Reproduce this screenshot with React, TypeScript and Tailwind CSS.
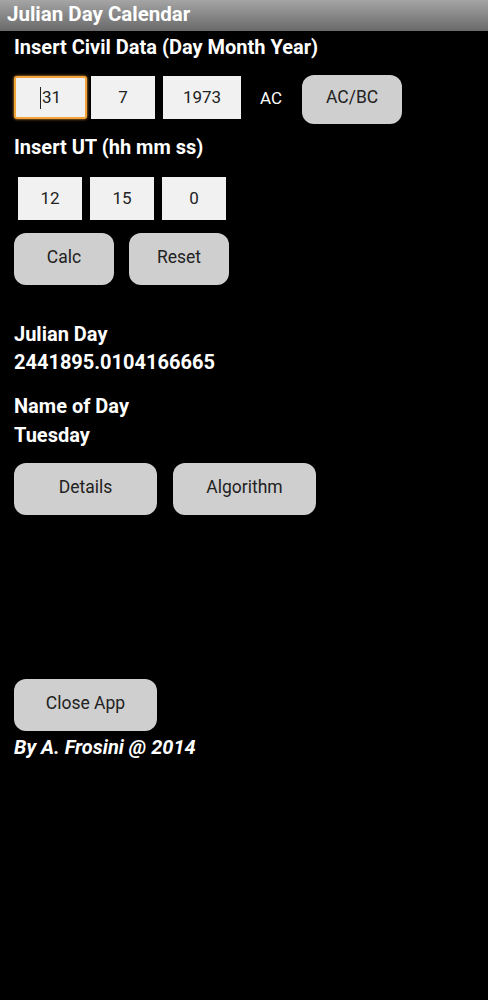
import React from 'react';

const font = { fontFamily: 'Roboto, "Noto Sans", sans-serif' };

function Field({ value, w, focused }: { value: string; w: string; focused?: boolean }) {
  return (
    <div
      className={`${w} h-[43px] flex items-center justify-center bg-[#f1f1f1] text-[17px] text-[#222] ${
        focused ? 'border-2 border-[#f2a33a] rounded-[3px] shadow-[0_0_3px_#f2a33a]' : ''
      }`}
    >
      {focused && <span className="w-px h-[22px] bg-[#222] mr-px" />}
      {value}
    </div>
  );
}

function Btn({ label, w, h = 'h-[52px]' }: { label: string; w: string; h?: string }) {
  return (
    <button className={`${w} ${h} rounded-[12px] bg-[#cfcfcf] text-[17.5px] text-[#222] pb-[4px]`}>
      {label}
    </button>
  );
}

export default function App() {
  return (
    <div className="w-[488px] h-[1000px] bg-black text-white" style={font}>
      <div className="h-[31px] bg-gradient-to-b from-[#a5a5a5] to-[#6a6a6a] pl-[7px] flex items-center text-[20.5px] font-bold leading-none pb-[3px]">
        Julian Day Calendar
      </div>

      <div className="pl-[14px]">
        <h2 className="text-[20px] font-bold leading-[24px] mt-[4px]">Insert Civil Data (Day Month Year)</h2>

        <div className="flex items-start mt-[17px] h-[46px]">
          <Field value="31" w="w-[73px]" focused />
          <div className="w-[4px]" />
          <Field value="7" w="w-[64px]" />
          <div className="w-[8px]" />
          <Field value="1973" w="w-[78px]" />
          <span className="ml-[19px] mt-[10px] text-[17px] text-white">AC</span>
          <div className="ml-[20px] -mt-[1px]">
            <Btn label="AC/BC" w="w-[100px]" h="h-[49px]" />
          </div>
        </div>

        <h2 className="text-[20px] font-bold leading-[24px] mt-[13px]">Insert UT (hh mm ss)</h2>

        <div className="flex mt-[18px] ml-[4px] gap-[8px]">
          <Field value="12" w="w-[64px]" />
          <Field value="15" w="w-[64px]" />
          <Field value="0" w="w-[64px]" />
        </div>

        <div className="flex mt-[13px] gap-[15px]">
          <Btn label="Calc" w="w-[100px]" />
          <Btn label="Reset" w="w-[100px]" />
        </div>

        <div className="mt-[35px] text-[20px] font-bold leading-[28px]">
          <div>Julian Day</div>
          <div>2441895.0104166665</div>
        </div>

        <div className="mt-[16px] text-[20px] font-bold leading-[29px]">
          <div>Name of Day</div>
          <div>Tuesday</div>
        </div>

        <div className="flex mt-[13px] gap-[16px]">
          <Btn label="Details" w="w-[143px]" />
          <Btn label="Algorithm" w="w-[143px]" />
        </div>

        <div className="mt-[164px]">
          <Btn label="Close App" w="w-[143px]" />
        </div>

        <div className="mt-[4px] text-[20px] font-bold italic leading-[24px]">By A. Frosini @ 2014</div>
      </div>
    </div>
  );
}
